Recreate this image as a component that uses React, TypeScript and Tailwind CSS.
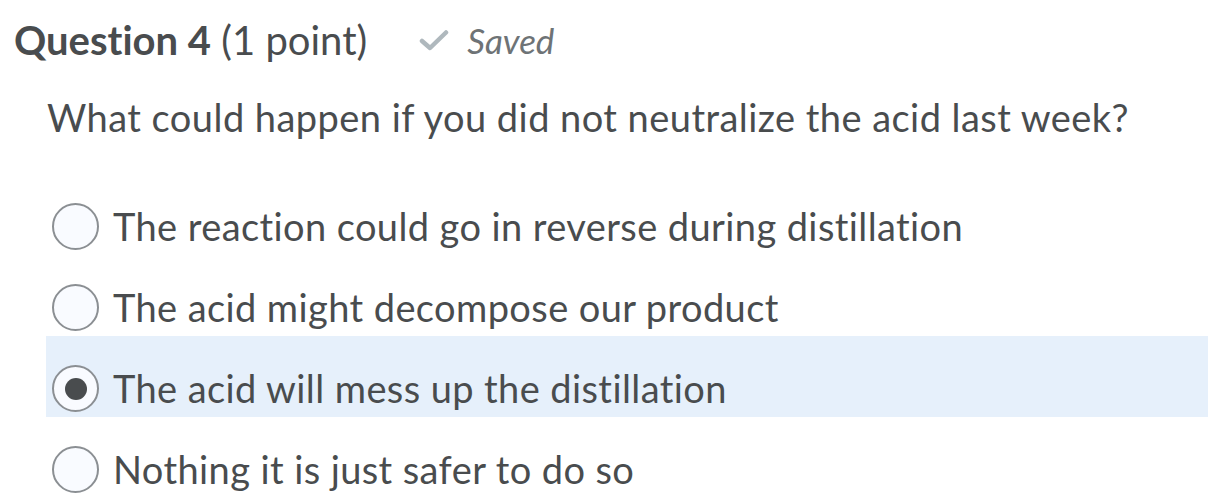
import { useState } from "react";

const options = [
  "The reaction could go in reverse during distillation",
  "The acid might decompose our product",
  "The acid will mess up the distillation",
  "Nothing it is just safer to do so",
];

export default function App() {
  const [selected, setSelected] = useState(2);

  return (
    <main className="w-[1208px] h-[504px] overflow-hidden bg-white text-[#494c4e] font-['Lato',sans-serif] [font-variant-ligatures:none]">
      {/* Header */}
      <div className="flex items-center h-[80px] pl-[14px]">
        <h2 className="text-[40px] leading-none">
          <span className="font-bold">Question 4</span> (1 point)
        </h2>
        <div className="flex items-center ml-[52px] text-[#6e7376]">
          <svg width="30" height="22" viewBox="0 0 30 22" className="mr-[18px]">
            <path d="M3 12 L11 19 L27 3.5" fill="none" stroke="#afb8bd" strokeWidth="4.5" strokeLinecap="round" strokeLinejoin="round" />
          </svg>
          <span className="italic text-[35px] leading-none">Saved</span>
        </div>
      </div>

      {/* Question */}
      <p className="pl-[47px] pt-[17px] text-[38px] leading-[40px] tracking-[0.45px]">
        What could happen if you did not neutralize the acid last week?
      </p>

      {/* Options */}
      <div className="mt-[37px] pl-[46px] flex flex-col">
        {options.map((o, i) => {
          const on = i === selected;
          return (
            <label
              key={o}
              onClick={() => setSelected(i)}
              className={`flex items-start h-[81px] pt-[29px] pl-[6px] cursor-pointer ${on ? "bg-[#e6f0fb]" : ""}`}
            >
              <span className="flex items-center justify-center w-[47px] h-[47px] rounded-full border-2 border-[#8b8f93] bg-[#f9fbff] mr-[14px] shrink-0">
                {on && <span className="w-[22px] h-[22px] rounded-full bg-[#494c4e]" />}
              </span>
              <span className="text-[38px] leading-[47px] tracking-[0.4px]">{o}</span>
            </label>
          );
        })}
      </div>
    </main>
  );
}
